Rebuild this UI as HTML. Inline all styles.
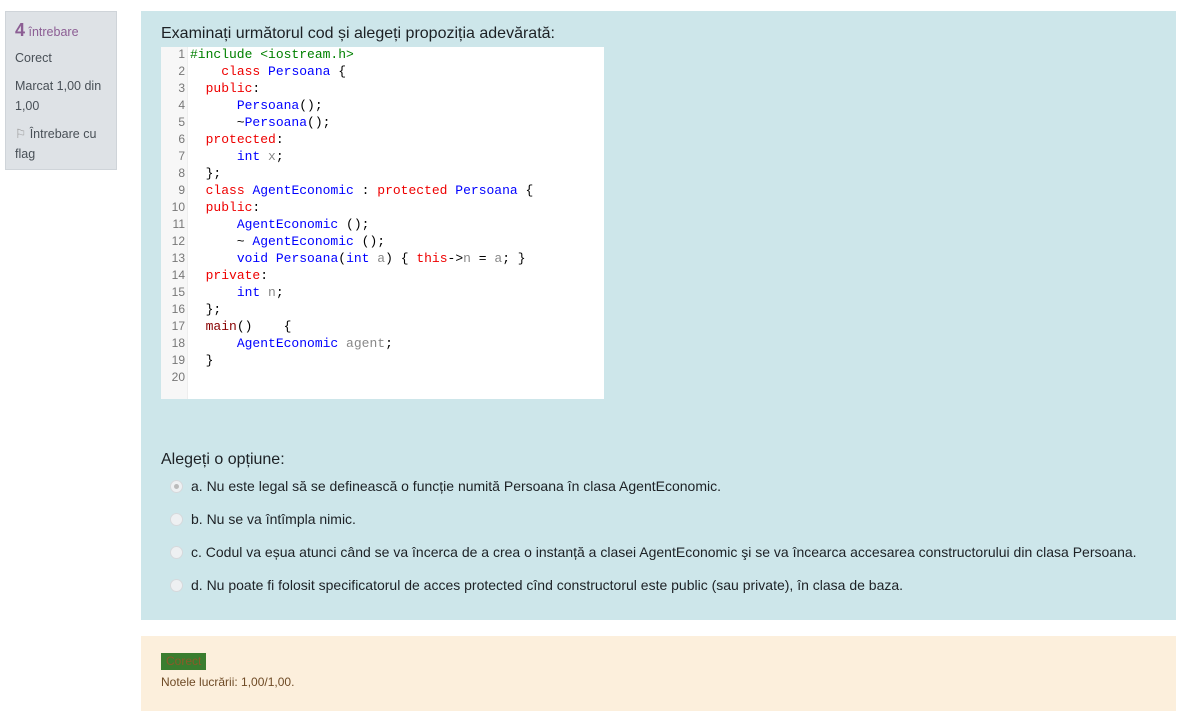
<!DOCTYPE html>
<html><head><meta charset="utf-8"><style>
body{margin:0;background:#fff;font-family:"Liberation Sans",Arial,sans-serif;width:1190px;height:726px;overflow:hidden;position:relative}
.info{position:absolute;left:5px;top:11px;width:112px;height:159px;background:#dee2e6;border:1px solid #cfd4d9;box-sizing:border-box;padding:8px 9px;font-size:12.5px;color:#495057;line-height:20px}
.info .n{color:#8c5e94;font-size:18px;font-weight:bold}
.info .q{color:#8c5e94}
.main{position:absolute;left:141px;top:11px;width:1035px;height:609px;background:#cde6ea}
.qt{position:absolute;left:20px;top:14px;font-size:16px;color:#1d2125}
.code{position:absolute;left:20px;top:36px;width:443px;height:352px;background:#fff}
.gut{position:absolute;left:0;top:0;width:26px;height:352px;background:#f7f7f7;border-right:1px solid #eee}
pre{margin:0;position:absolute;top:-1px;font-family:"Liberation Mono","Courier New",monospace;font-size:13px;line-height:17px}
.ln{left:0;width:24px;text-align:right;color:#777;font-family:"Liberation Sans",Arial,sans-serif;font-size:12px}
.src{left:29px;color:#000}
.k{color:#e00}.b{color:#00f}.g{color:#888}.p{color:#008000}.m{color:#800}
.opt{position:absolute;left:20px;font-size:14px;color:#1d2125}
.rad{display:inline-block;width:11px;height:11px;border-radius:50%;background:#eef0f2;border:1px solid #d6d9dc;vertical-align:-2px;margin:0 8px 0 10px;position:relative}
.rad.s::after{content:"";position:absolute;left:3px;top:3px;width:5px;height:5px;border-radius:50%;background:#bbb}
.fb{position:absolute;left:141px;top:636px;width:1035px;height:75px;background:#fcefdc}
.cor{position:absolute;left:20px;top:17px;background:#3a7d2f;color:#8a5a2a;font-size:12px;padding:0 5px;height:17px;line-height:17px}
.not{position:absolute;left:20px;top:39px;font-size:12px;color:#6e4a25}
</style></head><body>
<div class="info"><span class="n">4</span> <span class="q">întrebare</span><div style="margin-top:6px">Corect</div><div style="margin-top:8px">Marcat 1,00 din 1,00</div><div style="margin-top:8px"><span style="color:#999">⚐</span> Întrebare cu flag</div></div>
<div class="main">
<div class="qt">Examinați următorul cod și alegeți propoziția adevărată:</div>
<div class="code"><div class="gut"></div>
<pre class="ln">1
2
3
4
5
6
7
8
9
10
11
12
13
14
15
16
17
18
19
20</pre>
<pre class="src"><span class="p">#include &lt;iostream.h&gt;</span>
    <span class="k">class</span> <span class="b">Persoana</span> {
  <span class="k">public</span>:
      <span class="b">Persoana</span>();
      ~<span class="b">Persoana</span>();
  <span class="k">protected</span>:
      <span class="b">int</span> <span class="g">x</span>;
  };
  <span class="k">class</span> <span class="b">AgentEconomic</span> : <span class="k">protected</span> <span class="b">Persoana</span> {
  <span class="k">public</span>:
      <span class="b">AgentEconomic</span> ();
      ~ <span class="b">AgentEconomic</span> ();
      <span class="b">void</span> <span class="b">Persoana</span>(<span class="b">int</span> <span class="g">a</span>) { <span class="k">this</span>-&gt;<span class="g">n</span> = <span class="g">a</span>; }
  <span class="k">private</span>:
      <span class="b">int</span> <span class="g">n</span>;
  };
  <span class="m">main</span>()    {
      <span class="b">AgentEconomic</span> <span class="g">agent</span>;
  }
</pre></div>
<div class="qt" style="top:440px">Alegeți o opțiune:</div>
<div class="opt" style="top:467px;left:19px"><span class="rad s"></span>a. Nu este legal să se definească o funcție numită Persoana în clasa AgentEconomic.</div>
<div class="opt" style="top:500px;left:19px"><span class="rad"></span>b. Nu se va întîmpla nimic.</div>
<div class="opt" style="top:533px;left:19px"><span class="rad"></span>c. Codul va eșua atunci când se va încerca de a crea o instanță a clasei AgentEconomic şi se va încearca accesarea constructorului din clasa Persoana.</div>
<div class="opt" style="top:566px;left:19px"><span class="rad"></span>d. Nu poate fi folosit specificatorul de acces protected cînd constructorul este public (sau private), în clasa de baza.</div>
</div>
<div class="fb"><div class="cor">Corect</div><div class="not">Notele lucrării: 1,00/1,00.</div></div>
</body></html>
